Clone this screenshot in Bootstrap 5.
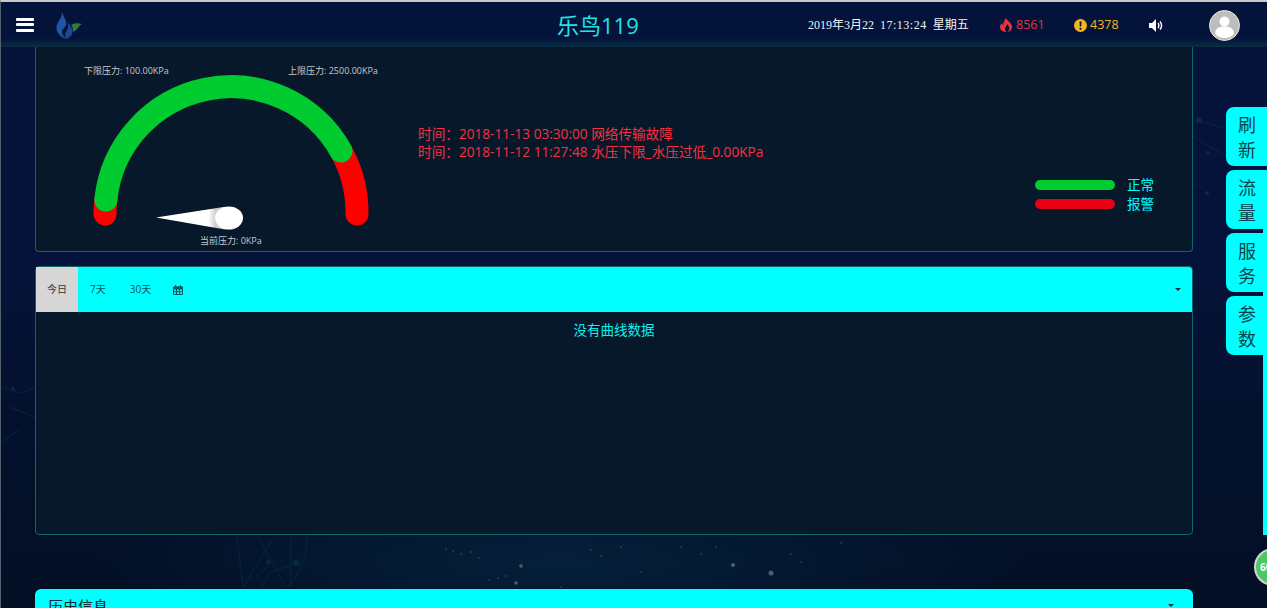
<!DOCTYPE html>
<html lang="zh-CN">
<head>
<meta charset="utf-8">
<title>乐鸟119</title>
<link href="https://cdn.jsdelivr.net/npm/bootstrap@5.3.0/dist/css/bootstrap.min.css" rel="stylesheet">
<style>
html,body{height:100%;overflow:hidden}
body{font-family:"Open Sans","Noto Sans CJK SC",sans-serif;background:#020f24;color:#0ff}
.stage{position:relative;height:608px;overflow:hidden;border-top:2px solid #c9c9c9;border-left:1px solid #55606e;
 background:
 radial-gradient(ellipse 480px 90px at 560px 560px,#05203a 0,transparent 100%),
 linear-gradient(180deg,#05133a 0,#05133a 260px,#04112e 400px,#020f24 100%)}
.deco{position:absolute;inset:0;width:1267px;height:608px;pointer-events:none}
.deco-faint{opacity:.45}
.topbar{position:relative;z-index:3;height:45px;background:linear-gradient(180deg,#04133a 0,#04133a 36px,#082a45 44px,#0a2f3e 45px);padding:0}
.burger{width:18px;height:14px;margin-left:15px;display:flex;flex-direction:column;justify-content:space-between}
.burger i{display:block;height:3px;border-radius:1px;background:#fff}
.logo-mark{margin:3px 0 0 21px}
.site-title{position:absolute;left:556px;top:7px;font-size:22px;line-height:33px;color:#1ce6e8}
.clock{position:absolute;left:807px;top:14px;font-size:12px;line-height:18px;color:#f2f2f2;font-family:"Liberation Serif","Noto Sans CJK SC",serif;white-space:pre}
.clock-time{letter-spacing:.5px}
.stat{position:absolute;top:13px;font-size:12.5px;line-height:20px;display:flex;align-items:center;gap:3px}
.stat-fire{left:999px;color:#e8323f}
.stat-warn{left:1073px;color:#f5b51f}
.sound{position:absolute;left:1148px;top:17px}
.avatar{position:absolute;left:1208px;top:8px}
.page-body{position:relative;z-index:1;padding:0 74px 0 34px}
.panel{background:#07182b;border:1px solid #0e666c;border-radius:4px}
.gauge-panel{height:205px;border-top:0;border-top-left-radius:0;border-top-right-radius:0;margin-bottom:14px}
.gauge-svg{flex:0 0 360px;display:block}
.gauge-svg text{font-size:9px;fill:#c6c9cc;font-family:"Open Sans","Noto Sans CJK SC",sans-serif}
.alarm-list{margin:78px 0 0 22px;font-size:13.65px;line-height:18px;color:#f5303f;white-space:nowrap}
.legend-box{margin:128px 38px 0 auto;font-size:13.5px;line-height:19px;color:#0ff}
.legend-row{display:flex;align-items:center;height:19px}
.legend-label{position:relative;top:1px}
.legend-bar{display:block;width:80px;height:10px;border-radius:5px;margin-right:12px}
.legend-ok{background:#00cc2f}
.legend-alarm{background:#e80012}
.chart-panel{height:269px;margin-bottom:54px}
.chart-head{height:45px;background:#0ff;display:flex;align-items:center;font-size:10px;color:#0c5560;border-radius:3px 3px 0 0}
.range-on{width:42px;height:45px;background:#d6d6d6;color:#333;display:flex;align-items:center;justify-content:center}
.range-first{margin-left:12px}
.range-next{margin-left:24px}
.range-icon{margin-left:22px}
.down-tip{width:0;height:0;border:3px solid transparent;border-top-color:#0b2a33;border-bottom:0}
.tip-chart{margin-right:11px}
.tip-history{margin-top:8px}
.empty-note{text-align:center;font-size:13.5px;line-height:18px;margin-top:9px;color:#10eeee}
.history-head{height:40px;background:#0ff;border-radius:6px 6px 0 0;display:flex;justify-content:space-between;padding:7px 19px 0 13px;font-size:15px;line-height:20px;color:#0b2a33}
.drawer-strip{position:absolute;z-index:2;left:1262px;top:227px;width:5px;height:306px;background:#0ff}
.side-tabs{position:absolute;z-index:2;left:1225px;top:105px;width:41px;display:flex;flex-direction:column;gap:4px}
.side-tab{background:#0ff;color:#0b4250;border-radius:8px 0 0 8px;font-size:18px;line-height:25px;padding:6px 0 3px 12px;height:59px;width:37px}
.side-tab.wide{width:41px}
.bubble{position:absolute;z-index:2;left:1253px;top:546px;width:38px;height:38px;border-radius:50%;background:#4cc764;border:2px solid #d5d5d5;color:#fff;font-size:10px;font-weight:700;line-height:34px;padding-left:4px;white-space:nowrap}
</style>
</head>
<body>
<div class="stage">
  <svg class="deco" viewBox="0 0 1267 608" aria-hidden="true" fill="none" stroke="#0c3a5c" stroke-width="1">
    <g class="deco-faint">
      <path d="M1196 118l26 8M1196 118l-12 12M1200 140l-16-12M1200 140l22 12M1196 185l-14-8"/>
      <path d="M236 535l6 50M258 535l26 50M272 536l-30 50M290 535v50M306 535c0 20-8 40-20 50M300 560l-30 10-10 16M255 575l20-18"/>
      <path d="M0 385l20 6 14-6M8 405l26 10M0 440l18-12"/>
      <g fill="#0e4468" stroke="none"><circle cx="1198" cy="118" r="3"/><circle cx="1207" cy="151" r="2"/><circle cx="1206" cy="191" r="2"/><circle cx="267" cy="560" r="2"/><circle cx="295" cy="561" r="3"/><circle cx="12" cy="387" r="2"/></g>
    </g>
    <g fill="#4a6072" stroke="none">
      <circle cx="770" cy="571" r="2.500"/><circle cx="732" cy="563" r="2"/><circle cx="520" cy="564" r="1.800"/><circle cx="515" cy="581" r="1.800"/>
      <circle cx="445" cy="547" r=".7"/><circle cx="452" cy="549" r=".7"/><circle cx="460" cy="552" r=".7"/><circle cx="470" cy="550" r=".7"/><circle cx="478" cy="556" r=".7"/><circle cx="488" cy="578" r=".7"/><circle cx="497" cy="576" r=".7"/><circle cx="505" cy="574" r=".7"/><circle cx="530" cy="588" r=".7"/><circle cx="560" cy="585" r=".7"/><circle cx="575" cy="596" r=".7"/><circle cx="600" cy="554" r=".7"/><circle cx="620" cy="545" r=".7"/><circle cx="590" cy="548" r=".7"/><circle cx="640" cy="570" r=".7"/><circle cx="618" cy="590" r=".7"/><circle cx="630" cy="598" r=".7"/><circle cx="650" cy="602" r=".7"/><circle cx="665" cy="598" r=".7"/><circle cx="640" cy="600" r=".7"/><circle cx="680" cy="545" r=".7"/><circle cx="700" cy="552" r=".7"/><circle cx="715" cy="545" r=".7"/><circle cx="790" cy="552" r=".7"/><circle cx="800" cy="560" r=".7"/><circle cx="840" cy="541" r=".7"/><circle cx="730" cy="601" r=".7"/>
    </g>
  </svg>

  <nav class="navbar topbar d-flex justify-content-start flex-nowrap">
    <span class="burger"><i></i><i></i><i></i></span>
    <svg class="logo-mark" width="28" height="28" viewBox="0 0 28 28" aria-hidden="true">
      <path d="M7 0C9 6 12 8 11 13C10 16 7 17 7 20C7 22 9 25 11 27C6 25 1 21 1.500 15C2 9 7 7 7 0z" fill="#1d56a6"/>
      <path d="M12 10C16 14 19 18 17 22C16 25 13 26 11 27C9 24 10 21 12 18C14 15 13 12 12 10z" fill="#174a96"/>
      <path d="M16 13C19 11 23 11 27 12C24 13 23 18 18 20C18 17 18 15 16 13z" fill="#2f7a3c"/>
    </svg>
    <span class="site-title">乐鸟119</span>
    <span class="clock">2019年3月22  <span class="clock-time">17:13:24</span>  星期五</span>
    <span class="stat stat-fire">
      <svg width="13" height="14" viewBox="0 0 13 14" aria-hidden="true"><path d="M6 0c1 3 5 4 6 8 .6 3-2 6-5 6 2-1 3-3 2-5-.5-1-1-1.500-1.500-3C6.500 8 5 9 5 11c0 1 .5 2 1 3-3 0-6-2-6-5 0-2 1-3 2-4 0 1 .5 2 1 2C3 4 5 2 6 0z" fill="currentColor"/></svg>
      8561
    </span>
    <span class="stat stat-warn">
      <svg width="13" height="13" viewBox="0 0 13 13" aria-hidden="true"><circle cx="6.500" cy="6.500" r="6.500" fill="currentColor"/><path d="M5.500 2.500h2l-.3 5H5.800z" fill="#04133a"/><circle cx="6.500" cy="9.800" r="1.100" fill="#04133a"/></svg>
      4378
    </span>
    <svg class="sound" width="14" height="13" viewBox="0 0 14 13" aria-hidden="true"><path d="M0 4h3l4-4v13l-4-4H0z" fill="#fff"/><path d="M9 4c1 1.500 1 3.500 0 5M11 2.500c2 2.500 2 5.500 0 8" stroke="#fff" stroke-width="1.400" fill="none"/></svg>
    <svg class="avatar" width="31" height="31" viewBox="0 0 31 31" aria-hidden="true"><circle cx="15.500" cy="15.500" r="15" fill="#bdbdbd" stroke="#e6e6e6"/><circle cx="15.500" cy="11.500" r="5" fill="#fff"/><path d="M6 24c0-5 4-7 6.500-7.500h6C21 17 25 19 25 24c-3 3-6 4-9.500 4S9 27 6 24z" fill="#fff"/></svg>
  </nav>

  <main class="page-body">
    <section class="panel gauge-panel d-flex">
      <svg class="gauge-svg" height="204" viewBox="36 47 360 204" aria-label="压力表">
        <text x="84" y="74">下限压力: 100.00KPa</text>
        <text x="288" y="74">上限压力: 2500.00KPa</text>
        <path d="M105 214A126 126 0 0 1 105.800 200" fill="none" stroke="#f00" stroke-width="23" stroke-linecap="round"/>
        <path d="M341 151A126 126 0 0 1 357 214" fill="none" stroke="#f00" stroke-width="23" stroke-linecap="round"/>
        <path d="M105.800 200A126 126 0 0 1 341 151" fill="none" stroke="#00cc2f" stroke-width="23" stroke-linecap="round"/>
        <defs><linearGradient id="needleShade" x1="0" x2="1" y1="0" y2="0"><stop offset=".76" stop-color="#fff"/><stop offset=".86" stop-color="#cfcfcf"/></linearGradient></defs>
        <path d="M156 217.500L225 206.800V229.500z" fill="url(#needleShade)"/>
        <ellipse cx="229" cy="218" rx="14" ry="11.500" fill="#fff"/>
        <text x="200" y="244">当前压力: 0KPa</text>
      </svg>
      <div class="alarm-list">
        <div>时间：2018-11-13 03:30:00 网络传输故障</div>
        <div>时间：2018-11-12 11:27:48 水压下限_水压过低_0.00KPa</div>
      </div>
      <div class="legend-box">
        <div class="legend-row"><span class="legend-bar legend-ok"></span><span class="legend-label">正常</span></div>
        <div class="legend-row"><span class="legend-bar legend-alarm"></span><span class="legend-label">报警</span></div>
      </div>
    </section>

    <section class="panel chart-panel">
      <div class="chart-head">
        <span class="range-on">今日</span>
        <span class="range-first">7天</span>
        <span class="range-next">30天</span>
        <svg class="range-icon" width="10" height="10" viewBox="0 0 10 10" aria-hidden="true"><path d="M.5 1.500h9v2.500h-9z" fill="#0c5560"/><path d="M.5 2h9v7.500h-9zM.5 4h9M3.500 4v5.500M6.500 4v5.500M.5 6.700h9M2.500 0v2.500M7.500 0v2.500" fill="none" stroke="#0c5560"/></svg>
        <span class="down-tip ms-auto tip-chart"></span>
      </div>
      <div class="empty-note">没有曲线数据</div>
    </section>

    <section class="history-head"><span>历史信息</span><span class="down-tip tip-history"></span></section>
  </main>

  <div class="drawer-strip"></div>
  <div class="side-tabs">
    <div class="side-tab wide">刷<br>新</div>
    <div class="side-tab wide">流<br>量</div>
    <div class="side-tab">服<br>务</div>
    <div class="side-tab">参<br>数</div>
  </div>
  <div class="bubble">60%</div>
</div>
<script src="https://cdn.jsdelivr.net/npm/bootstrap@5.3.0/dist/js/bootstrap.bundle.min.js"></script>
</body>
</html>
